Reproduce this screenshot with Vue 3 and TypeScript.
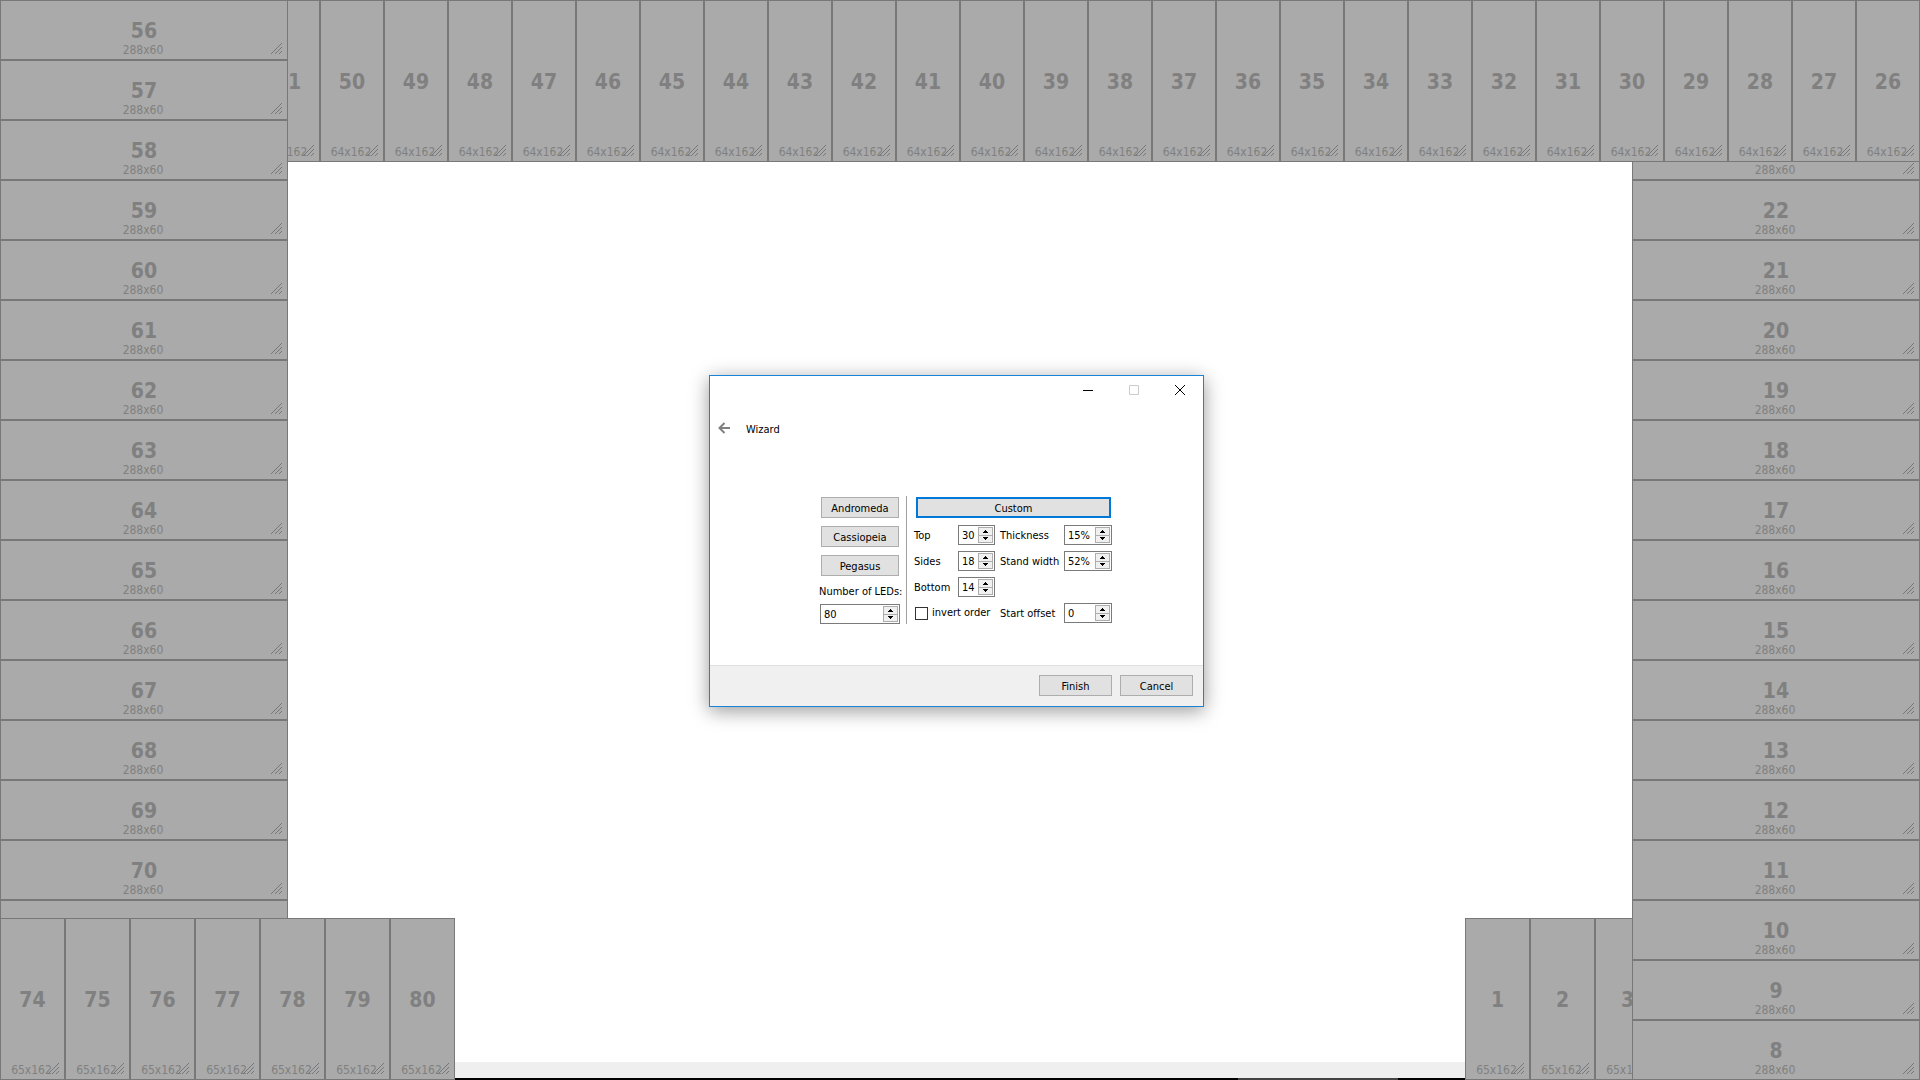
<script setup lang="ts">
import { reactive, ref } from 'vue'

interface Field {
  id: string
  label: string
  value: number
  suffix: string
  kind: 'narrow' | 'wide'
}

const range = (from: number, to: number): number[] =>
  Array.from({ length: Math.abs(to - from) + 1 }, (_, i) => from + (to > from ? i : -i))

const strips = [
  { name: 'left', size: '288x60', zones: range(56, 71) },
  { name: 'top', size: '64x162', zones: range(51, 26) },
  { name: 'right', size: '288x60', zones: range(23, 8) },
  { name: 'bottom-left', size: '65x162', zones: range(74, 80) },
  { name: 'bottom-right', size: '65x162', zones: range(1, 3) },
]

const presets = ['Andromeda', 'Cassiopeia', 'Pegasus']
const invertOrder = ref(false)

const total = reactive<Field>({ id: 'total', label: 'Number of LEDs:', value: 80, suffix: '', kind: 'wide' })
const fields = reactive<Field[]>([
  { id: 'top', label: 'Top', value: 30, suffix: '', kind: 'narrow' },
  { id: 'thickness', label: 'Thickness', value: 15, suffix: '%', kind: 'wide' },
  { id: 'sides', label: 'Sides', value: 18, suffix: '', kind: 'narrow' },
  { id: 'stand', label: 'Stand width', value: 52, suffix: '%', kind: 'wide' },
  { id: 'bottom', label: 'Bottom', value: 14, suffix: '', kind: 'narrow' },
  { id: 'offset', label: 'Start offset', value: 0, suffix: '', kind: 'wide' },
])

function step(field: Field, by: number): void {
  field.value = Math.max(0, field.value + by)
}

function update(field: Field, event: Event): void {
  field.value = parseInt((event.target as HTMLInputElement).value, 10) || 0
}
</script>

<template>
  <main class="screen">
    <section v-for="strip in strips" :key="strip.name" class="strip" :class="strip.name">
      <div v-for="zone in strip.zones" :key="zone" class="zone">
        <strong class="zone-number">{{ zone }}</strong>
        <span class="zone-size">{{ strip.size }}</span>
        <svg class="grip" width="11" height="11" viewBox="0 0 11 11" aria-hidden="true">
          <path d="M0 11L11 0M4 11L11 4M8 11L11 8" />
        </svg>
      </div>
    </section>

    <div class="stand"><div class="taskbar"><i class="task"></i></div></div>

    <form class="dialog" @submit.prevent>
      <div class="titlebar">
        <button type="button" class="caption" aria-label="Minimize">
          <svg width="10" height="11" viewBox="0 0 10 11"><path d="M0 5.500H10" /></svg>
        </button>
        <button type="button" class="caption" aria-label="Maximize" disabled>
          <svg width="10" height="11" viewBox="0 0 10 11"><path d="M.5.5H9.500V9.500H.5Z" /></svg>
        </button>
        <button type="button" class="caption" aria-label="Close">
          <svg width="10" height="11" viewBox="0 0 10 11"><path d="M0 0L10 10M10 0L0 10" /></svg>
        </button>
      </div>

      <header class="heading">
        <button type="button" class="back" aria-label="Back">
          <svg width="13" height="12" viewBox="0 0 13 12"><path d="M1 6H12M6.500 1L1.500 6L6.500 11" /></svg>
        </button>
        <h1 class="title">Wizard</h1>
      </header>

      <div class="body">
        <div class="presets">
          <button v-for="name in presets" :key="name" type="button" class="push">{{ name }}</button>
          <label class="total-label" for="total">{{ total.label }}</label>
          <div class="spin">
            <input id="total" class="spin-input" inputmode="numeric" :value="total.value" @change="update(total, $event)" />
            <span class="steps">
              <button type="button" class="step" aria-label="Increase" @click="step(total, 1)">
                <svg width="5" height="3" viewBox="0 0 5 3"><path d="M0 3V2H1V1H2V0H3V1H4V2H5V3Z" /></svg>
              </button>
              <button type="button" class="step" aria-label="Decrease" @click="step(total, -1)">
                <svg width="5" height="3" viewBox="0 0 5 3"><path d="M0 0V1H1V2H2V3H3V2H4V1H5V0Z" /></svg>
              </button>
            </span>
          </div>
        </div>

        <div class="divider"></div>

        <div class="custom">
          <button type="button" class="push selected">Custom</button>
          <template v-for="field in fields" :key="field.id">
            <label v-if="field.id === 'offset'" class="check">
              <input v-model="invertOrder" type="checkbox" class="tick" />invert order
            </label>
            <label :for="field.id" class="field-label" :class="field.kind">{{ field.label }}</label>
            <div class="spin" :class="field.kind">
              <input
                :id="field.id"
                class="spin-input"
                inputmode="numeric"
                :value="field.value + field.suffix"
                @change="update(field, $event)"
              />
              <span class="steps">
                <button type="button" class="step" aria-label="Increase" @click="step(field, 1)">
                  <svg width="5" height="3" viewBox="0 0 5 3"><path d="M0 3V2H1V1H2V0H3V1H4V2H5V3Z" /></svg>
                </button>
                <button type="button" class="step" aria-label="Decrease" @click="step(field, -1)">
                  <svg width="5" height="3" viewBox="0 0 5 3"><path d="M0 0V1H1V2H2V3H3V2H4V1H5V0Z" /></svg>
                </button>
              </span>
            </div>
          </template>
        </div>
      </div>

      <footer class="actions">
        <button type="submit" class="push">Finish</button>
        <button type="button" class="push">Cancel</button>
      </footer>
    </form>
  </main>
</template>

<style>
body {
  background: #fff;
}
</style>

<style scoped>
.screen,
.screen * {
  box-sizing: border-box;
}

.screen {
  --stand: 1010px;
  --foot: calc((100vw - var(--stand)) / 14);
  position: relative;
  display: grid;
  grid-template-columns: 15vw calc(7 * var(--foot) - 15vw) 1fr calc(7 * var(--foot) - 15vw) 15vw;
  grid-template-rows: 15vh 1fr 15vh;
  height: 100vh;
  overflow: hidden;
  font-family: 'DejaVu Sans Condensed', 'DejaVu Sans', sans-serif;
  font-stretch: condensed;
}

/* LED capture zones along the edges */
.strip {
  display: flex;
  overflow: hidden;
}

.left,
.right {
  flex-direction: column;
}

.left {
  grid-area: 1 / 1 / 3 / 2;
}

.top {
  grid-area: 1 / 2 / 2 / 6;
  justify-content: flex-end;
}

.right {
  grid-area: 2 / 5 / 4 / 6;
  justify-content: flex-end;
}

.bottom-left {
  grid-area: 3 / 1 / 4 / 3;
}

.bottom-right {
  grid-area: 3 / 4 / 4 / 5;
}

.zone {
  position: relative;
  display: grid;
  flex: none;
  border: 1px solid #787878;
  background: #aaa;
  color: #808080;
}

.left .zone,
.right .zone {
  height: calc(100vh / 18);
}

.top .zone {
  width: calc(100vw / 30);
}

.bottom-left .zone,
.bottom-right .zone {
  width: var(--foot);
}

.zone-number,
.zone-size {
  grid-area: 1 / 1;
  justify-self: center;
}

.zone-number {
  align-self: center;
  padding-top: 1px;
  font-size: 21px;
  line-height: 24px;
}

.zone-size {
  align-self: end;
  padding: 0 2px 2px 0;
  font-size: 12px;
  line-height: 14px;
}

.grip {
  position: absolute;
  right: 5px;
  bottom: 5px;
  fill: none;
  stroke: #777;
  stroke-width: 1;
}

.stand {
  grid-area: 3 / 3;
  display: flex;
  align-items: flex-end;
}

.taskbar {
  display: flex;
  flex: 1;
  justify-content: flex-end;
  height: 18px;
  padding: 16px 67px 0 0;
  background: linear-gradient(#efefef 16px, #000 16px);
}

.task {
  width: 160px;
  background: #444;
}

/* Wizard window */
.dialog {
  position: absolute;
  top: calc(50% - 165px);
  left: calc(50% - 251px);
  display: flex;
  flex-direction: column;
  width: 495px;
  border: 1px solid #1883d7;
  background: #fff;
  box-shadow: 0 4px 18px rgba(0, 0, 0, 0.4);
  color: #000;
  font-size: 11px;
  line-height: 14px;
}

button,
input {
  margin: 0;
  font: inherit;
  color: inherit;
}

.titlebar {
  display: flex;
  justify-content: flex-end;
  height: 29px;
}

.caption {
  display: grid;
  place-items: center;
  width: 46px;
  padding: 0;
  border: 0;
  background: none;
  fill: none;
  stroke: #000;
}

.caption:disabled {
  stroke: #ccc;
}

.heading {
  display: flex;
  align-items: center;
  gap: 15px;
  height: 44px;
  padding: 2px 8px 0;
}

.back {
  display: flex;
  padding: 0;
  border: 0;
  background: none;
  fill: none;
  stroke: #808080;
  stroke-width: 2;
}

.title {
  margin: 4px 0 0;
  font-size: 11px;
  font-weight: 400;
}

.body {
  display: flex;
  gap: 6px;
  padding: 47px 90px 41px 110px;
}

.presets {
  display: flex;
  flex-direction: column;
  width: 80px;
  padding-top: 1px;
}

.push {
  height: 21px;
  padding: 2px 0 0;
  border: 1px solid #adadad;
  background: #e1e1e1;
  text-align: center;
}

.presets .push {
  margin: 0 1px 8px;
}

.total-label {
  margin: 1px -1px 5px;
  white-space: nowrap;
}

.divider {
  width: 2px;
  border-left: 1px solid #a0a0a0;
}

.custom {
  display: grid;
  grid-template-columns: 44px 37px 5px 64px 48px;
  grid-template-rows: 22px repeat(4, 20px);
  row-gap: 6px;
  align-items: center;
  padding-top: 1px;
}

.selected {
  grid-column: 1 / -1;
  align-self: start;
  margin: 0 1px 0 2px;
  border: 2px solid #0078d7;
}

.field-label {
  padding-top: 2px;
  white-space: nowrap;
}

.field-label.narrow {
  grid-column: 1;
}

.field-label.wide {
  grid-column: 4;
}

.spin.wide {
  grid-column: 5;
}

.check {
  display: flex;
  grid-column: 1 / 4;
  gap: 4px;
  align-items: center;
  padding-left: 1px;
  white-space: nowrap;
}

.tick {
  appearance: none;
  width: 13px;
  height: 13px;
  border: 1px solid #333;
  background: #fff;
}

.tick:checked {
  background: #333;
  box-shadow: inset 0 0 0 2px #fff;
}

.spin {
  display: flex;
  height: 20px;
  padding: 1px;
  border: 1px solid #7a7a7a;
  background: #fff;
}

.spin-input {
  flex: 1;
  width: 0;
  padding: 2px 0 0 2px;
  border: 0;
  outline: 0;
  background: none;
}

.steps {
  display: flex;
  flex-direction: column;
  width: 15px;
}

.step {
  display: grid;
  flex: 1;
  place-items: center;
  min-height: 0;
  padding: 0;
  border: 1px solid #adadad;
  background: #f0f0f0;
}

.step + .step {
  border-top: 0;
}

.actions {
  display: flex;
  gap: 8px;
  justify-content: flex-end;
  padding: 9px 10px 10px;
  border-top: 1px solid #dfdfdf;
  background: #f0f0f0;
}

.actions .push {
  width: 73px;
}
</style>
